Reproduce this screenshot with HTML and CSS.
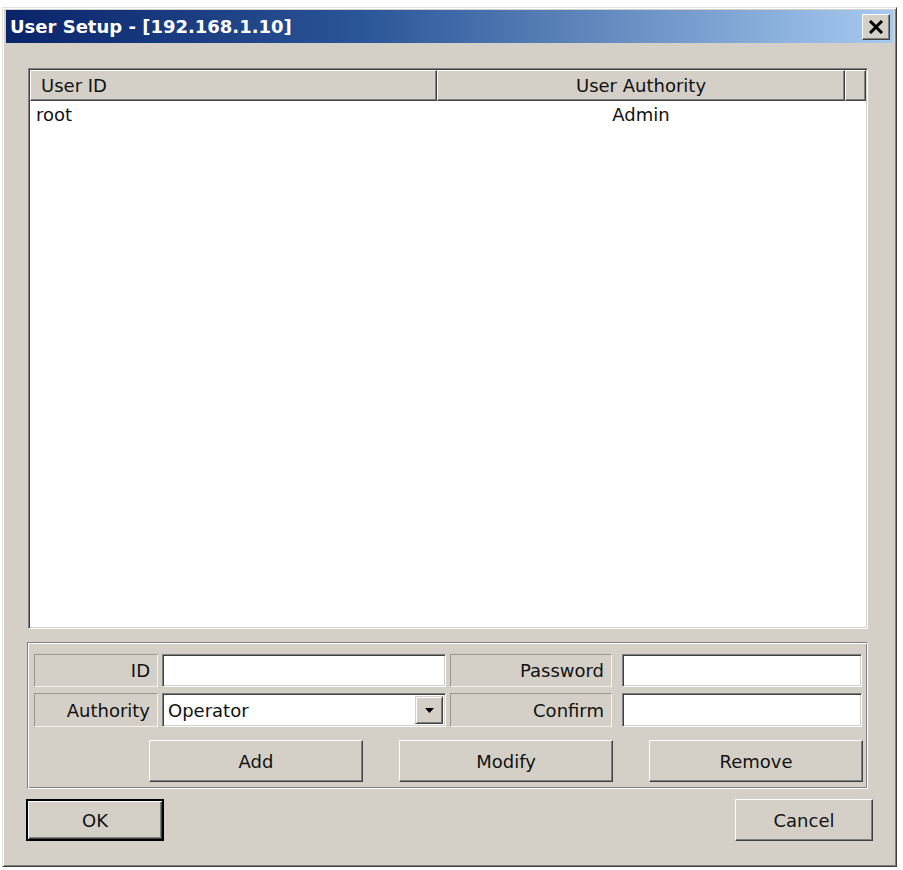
FILE: index.html
```html
<!DOCTYPE html>
<html lang="en">
<head>
    <meta charset="UTF-8">
    <meta name="viewport" content="width=device-width, initial-scale=1.0">
    <title>User Setup</title>
    <link rel="stylesheet" href="styles.css">
</head>
<body>
    <div class="window">
        <div class="titlebar">
            <span class="title">User Setup - [192.168.1.10]</span>
            <button class="close-btn" title="Close">
                <svg width="16" height="14" viewBox="0 0 16 14">
                    <path d="M2 1 L14 13 M14 1 L2 13" stroke="#000" stroke-width="3" fill="none"/>
                </svg>
            </button>
        </div>

        <div class="content">
            <!-- user list -->
            <div class="listview">
                <div class="lv-head">
                    <div class="lv-col col-id">User ID</div>
                    <div class="lv-col col-auth">User Authority</div>
                    <div class="lv-col col-fill"></div>
                </div>
                <div class="lv-body">
                    <div class="lv-row">
                        <span class="cell-id">root</span>
                        <span class="cell-auth">Admin</span>
                    </div>
                </div>
            </div>

            <!-- edit group -->
            <div class="group">
                <div class="form-grid">
                    <div class="label">ID</div>
                    <input type="text" class="field" id="user-id">
                    <div class="label label-right">Password</div>
                    <input type="password" class="field" id="user-pass">

                    <div class="label">Authority</div>
                    <div class="field combo">
                        <span class="combo-text">Operator</span>
                        <span class="combo-btn">
                            <svg width="9" height="5" viewBox="0 0 9 5"><path d="M0 0 H9 L4.5 5 Z" fill="#000"/></svg>
                        </span>
                    </div>
                    <div class="label label-right">Confirm</div>
                    <input type="password" class="field" id="user-confirm">
                </div>
                <div class="btn-row">
                    <button class="win-btn">Add</button>
                    <button class="win-btn">Modify</button>
                    <button class="win-btn">Remove</button>
                </div>
            </div>

            <div class="dlg-buttons">
                <button class="win-btn dlg-btn default">OK</button>
                <button class="win-btn dlg-btn">Cancel</button>
            </div>
        </div>
    </div>
</body>
</html>
```

FILE: styles.css
```css
body {
    margin: 0;
    background: #fff;
    font-family: "DejaVu Sans", Verdana, sans-serif;
    font-size: 18px;
    color: #111;
}
.window {
    margin: 7px 0 0 2px;
    width: 895px;
    height: 860px;
    box-sizing: border-box;
    background: #d4d0c8;
    border: 1px solid;
    border-color: #e4e2dc #404040 #404040 #e4e2dc;
    box-shadow: inset 1px 1px #fff, inset -1px -1px #808080;
    padding: 2px 3px 3px 3px;
}
.titlebar {
    height: 33px;
    display: flex;
    align-items: center;
    justify-content: space-between;
    background: linear-gradient(to right, #0a246a, #2a5597 40%, #a6caf0);
    padding: 0 3px 0 4px;
}
.title {
    color: #fff;
    font-weight: bold;
    font-size: 18px;
}
.close-btn {
    width: 28px;
    height: 26px;
    padding: 0;
    display: flex;
    align-items: center;
    justify-content: center;
    background: #d4d0c8;
    border: 1px solid;
    border-color: #fff #404040 #404040 #fff;
    box-shadow: inset -1px -1px #808080;
}
.content {
    padding: 25px 25px 0 22px;
}

/* list view */
.listview {
    height: 561px;
    box-sizing: border-box;
    background: #fff;
    border: 1px solid;
    border-color: #808080 #fff #fff #808080;
    box-shadow: inset 1px 1px #404040, inset -1px -1px #d4d0c8;
    padding: 1px;
}
.lv-head {
    display: flex;
    height: 31px;
}
.lv-col {
    box-sizing: border-box;
    background: #d4d0c8;
    border: 1px solid;
    border-color: #fff #404040 #404040 #fff;
    box-shadow: inset -1px -1px #808080;
    display: flex;
    align-items: center;
}
.col-id {
    width: 407px;
    padding-left: 10px;
}
.col-auth {
    width: 408px;
    justify-content: center;
}
.col-fill {
    flex: 1;
}
.lv-row {
    display: flex;
    height: 26px;
    align-items: center;
}
.cell-id {
    width: 407px;
    padding-left: 6px;
    box-sizing: border-box;
}
.cell-auth {
    width: 408px;
    text-align: center;
}

/* group box */
.group {
    margin: 13px 0 0 -1px;
    width: 841px;
    height: 147px;
    box-sizing: border-box;
    border: 1px solid;
    border-color: #808080 #fff #fff #808080;
    box-shadow: inset 1px 1px #fff, inset -1px -1px #808080;
    padding: 11px 0 0 6px;
}
.form-grid {
    display: grid;
    grid-template-columns: 124px 284px 168px 240px;
    grid-template-rows: 33px 34px;
    column-gap: 4px;
    row-gap: 6px;
}
.label {
    box-sizing: border-box;
    border: 1px solid;
    border-color: #9a978f #f4f3f0 #f4f3f0 #9a978f;
    display: flex;
    align-items: center;
    justify-content: flex-end;
    padding-right: 7px;
}
.label-right {
    margin-right: 6px;
}
.field {
    box-sizing: border-box;
    margin: 0;
    height: 100%;
    background: #fff;
    border: 1px solid;
    border-color: #808080 #fff #fff #808080;
    box-shadow: inset 1px 1px #404040, inset -1px -1px #d4d0c8;
    font: inherit;
    padding: 0 4px;
}
.combo {
    display: flex;
    align-items: center;
    justify-content: space-between;
    padding: 2px;
}
.combo-text {
    padding-left: 3px;
}
.combo-btn {
    width: 28px;
    height: 100%;
    box-sizing: border-box;
    background: #d4d0c8;
    border: 1px solid;
    border-color: #d4d0c8 #404040 #404040 #d4d0c8;
    box-shadow: inset 1px 1px #fff, inset -1px -1px #808080;
    display: flex;
    align-items: center;
    justify-content: center;
}
.btn-row {
    display: flex;
    gap: 36px;
    margin: 13px 0 0 115px;
}
.win-btn {
    width: 214px;
    height: 42px;
    background: #d4d0c8;
    border: 1px solid;
    border-color: #fff #404040 #404040 #fff;
    box-shadow: inset -1px -1px #808080;
    font: inherit;
    color: #111;
    padding: 0;
}

/* OK / Cancel */
.dlg-buttons {
    display: flex;
    justify-content: space-between;
    margin: 10px -5px 0 -2px;
}
.dlg-btn {
    width: 138px;
}
.dlg-btn.default {
    border: 2px solid #000;
    box-shadow: inset 1px 1px #fff, inset -1px -1px #404040, inset -2px -2px #808080;
}
```
